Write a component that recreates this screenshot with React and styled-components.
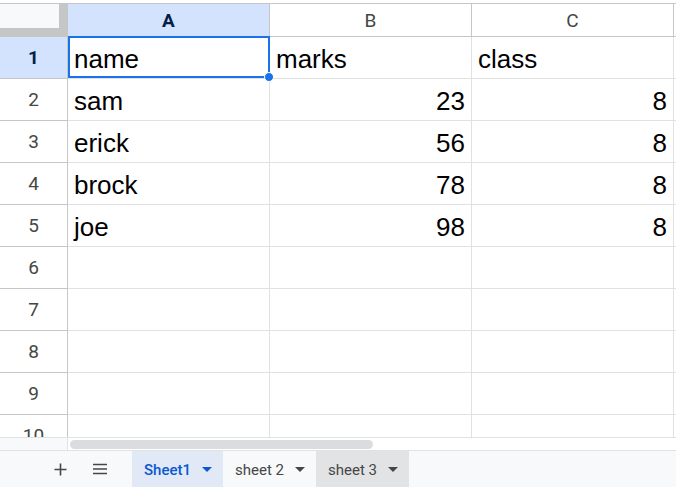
import React from "react";
import styled, { createGlobalStyle, css } from "styled-components";

const Global = createGlobalStyle`
  html, body { margin: 0; padding: 0; background: #fff; overflow: hidden; }
  body { width: 676px; height: 487px; }
`;

const Page = styled.div`
  width: 676px;
  height: 487px;
  display: flex;
  flex-direction: column;
  padding-top: 3px;
  box-sizing: border-box;
  background: #fff;
`;

const GridWrap = styled.div`
  position: relative;
  height: 434px;
  overflow: hidden;
  border-top: 1px solid #c4c7c5;
  box-sizing: border-box;
`;

const Grid = styled.div`
  display: grid;
  grid-template-columns: 68px 202px 202px 202px 1fr;
  grid-auto-rows: 42px;
  grid-template-rows: 33px;
`;

const Corner = styled.div`
  background: #f8f9fa;
  box-sizing: border-box;
  border-right: 9px solid #c4c7c5;
  border-bottom: 9px solid #c4c7c5;
`;

const headStyle = css`
  box-sizing: border-box;
  border-right: 1px solid #c4c7c5;
  border-bottom: 1px solid #c4c7c5;
  background: ${(p) => (p.$active ? "#d3e3fd" : "#fff")};
  color: ${(p) => (p.$active ? "#041e49" : "#444746")};
  font-family: Roboto, "Liberation Sans", sans-serif;
  font-size: 19px;
  font-weight: ${(p) => (p.$active ? 700 : 400)};
  display: flex;
  align-items: center;
  justify-content: center;
`;

const ColHead = styled.div`
  ${headStyle}
`;

const RowHead = styled.div`
  ${headStyle}
`;

const Cell = styled.div`
  box-sizing: border-box;
  border-right: 1px solid #e1e1e1;
  border-bottom: 1px solid #e1e1e1;
  font-family: "Liberation Sans", Arial, sans-serif;
  font-size: 26px;
  color: #000;
  display: flex;
  align-items: flex-end;
  justify-content: ${(p) => (p.$num ? "flex-end" : "flex-start")};
  padding: 0 6px 4px 6px;
  line-height: 30px;
  white-space: nowrap;
  overflow: hidden;
`;

const Selection = styled.div`
  position: absolute;
  left: 68px;
  top: 32px;
  width: 202px;
  height: 42px;
  box-sizing: border-box;
  border: 2px solid #1a73e8;
  pointer-events: none;
`;

const Handle = styled.div`
  position: absolute;
  right: -6px;
  bottom: -6px;
  width: 8px;
  height: 8px;
  border-radius: 50%;
  background: #1a73e8;
  border: 1px solid #fff;
`;

const ScrollStrip = styled.div`
  height: 13px;
  display: flex;
  border-top: 1px solid #e1e3e1;
  box-sizing: border-box;
`;

const ScrollCorner = styled.div`
  width: 67px;
  background: #f8f9fa;
  border-right: 1px solid #e1e3e1;
`;

const ScrollTrack = styled.div`
  flex: 1;
  background: #fff;
  padding: 1px 2px;
  display: flex;
  align-items: center;
`;

const Thumb = styled.div`
  width: 303px;
  height: 9px;
  border-radius: 5px;
  background: #dadce0;
`;

const TabBar = styled.div`
  flex: 1;
  background: #f8f9fa;
  border-top: 1px solid #e1e3e1;
  display: flex;
  align-items: stretch;
  padding-left: 40px;
`;

const IconBtn = styled.div`
  width: 40px;
  display: flex;
  align-items: center;
  justify-content: center;
`;

const Tabs = styled.div`
  display: flex;
  margin-left: 12px;
`;

const Tab = styled.div`
  display: flex;
  align-items: center;
  gap: 11px;
  padding: 1px 11px 0 12px;
  font-family: Roboto, "Liberation Sans", sans-serif;
  font-size: 15px;
  color: #444746;
  ${(p) =>
    p.$active &&
    css`
      background: #e1e9f7;
      color: #0b57d0;
      font-weight: 500;
    `}
  ${(p) =>
    p.$hover &&
    css`
      background: #e1e3e4;
    `}
`;

const Caret = ({ color }) => (
  <svg width="10" height="5" viewBox="0 0 10 5">
    <path d="M0 0 L10 0 L5 5 Z" fill={color} />
  </svg>
);

const rows = [
  ["name", "marks", "class"],
  ["sam", "23", "8"],
  ["erick", "56", "8"],
  ["brock", "78", "8"],
  ["joe", "98", "8"],
  ["", "", ""],
  ["", "", ""],
  ["", "", ""],
  ["", "", ""],
  ["", "", ""],
];

export default function App() {
  return (
    <>
      <Global />
      <Page>
        <GridWrap>
          <Grid>
            <Corner />
            <ColHead $active>A</ColHead>
            <ColHead>B</ColHead>
            <ColHead>C</ColHead>
            <ColHead />
            {rows.map((r, i) => (
              <React.Fragment key={i}>
                <RowHead $active={i === 0}>{i + 1}</RowHead>
                {r.map((v, j) => (
                  <Cell key={j} $num={/^\d+$/.test(v)}>
                    {v}
                  </Cell>
                ))}
                <Cell />
              </React.Fragment>
            ))}
          </Grid>
          <Selection>
            <Handle />
          </Selection>
        </GridWrap>
        <ScrollStrip>
          <ScrollCorner />
          <ScrollTrack>
            <Thumb />
          </ScrollTrack>
        </ScrollStrip>
        <TabBar>
          <IconBtn>
            <svg width="13" height="13" viewBox="0 0 13 13">
              <path d="M6.5 0.5 V12.5 M0.5 6.5 H12.5" stroke="#444746" strokeWidth="1.6" />
            </svg>
          </IconBtn>
          <IconBtn>
            <svg width="16" height="12" viewBox="0 0 16 12">
              <path d="M1 1.5 H15 M1 6 H15 M1 10.5 H15" stroke="#444746" strokeWidth="1.6" />
            </svg>
          </IconBtn>
          <Tabs>
            <Tab $active>
              Sheet1 <Caret color="#0b57d0" />
            </Tab>
            <Tab>
              sheet 2 <Caret color="#444746" />
            </Tab>
            <Tab $hover>
              sheet 3 <Caret color="#444746" />
            </Tab>
          </Tabs>
        </TabBar>
      </Page>
    </>
  );
}
